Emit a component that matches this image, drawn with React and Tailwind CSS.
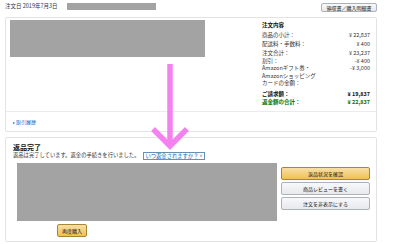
const yellowBtn =
  "flex items-center justify-center rounded-[2px] border border-[#a88734] bg-gradient-to-b from-[#f7dfa5] to-[#f0c14b] text-[5px] leading-none text-[#111]";
const grayBtn =
  "flex items-center justify-center rounded-[2px] border border-[#adb1b8] bg-gradient-to-b from-[#f7f8fa] to-[#e7e9ec] text-[5px] leading-none text-[#111]";

const Row = ({ label, value, className = "", h = "leading-[8px]" }) => (
  <div className={`flex justify-between ${h} ${className}`}>
    <span>{label}</span>
    <span className="whitespace-nowrap">{value}</span>
  </div>
);

const App = () => {
  return (
    <div className="relative w-[400px] h-[244px] overflow-hidden bg-white font-['Noto_Sans_CJK_JP',sans-serif] text-[#111]">
      {/* header */}
      <div className="flex items-start justify-between pl-[5px] pr-[23px] pt-[2px] h-[17px]">
        <div className="flex items-center">
          <span className="text-[5.5px] leading-[8px] text-[#333]">注文日 2019年7月3日</span>
          <div className="ml-[9px] w-[89px] h-[7px] bg-[#a3a3a3]" />
        </div>
        <div className={`${grayBtn} mt-[1px] w-[56px] h-[9px]`}>領収書／購入明細書</div>
      </div>

      {/* order card */}
      <div className="mx-[5px] w-[372px] h-[115px] rounded-[2px] border border-[#e3e3e3] flex flex-col">
        <div className="flex h-[94px] border-b border-[#ebebeb]">
          <div className="ml-[4px] mt-[2px] w-[195px] h-[37px] bg-[#a3a3a3]" />
          <div className="ml-[57px] mt-[3px] w-[108px] text-[5.5px] text-[#333]">
            <div className="font-bold leading-[8px] text-[#111]">注文内容</div>
            <Row className="mt-[2px]" label="商品の小計：" value="¥ 22,837" />
            <Row className="mt-[1px]" label="配送料・手数料：" value="¥ 400" />
            <Row className="mt-[1px]" label="注文合計：" value="¥ 23,237" />
            <Row className="mt-[1px]" h="leading-[7px]" label="割引：" value="-¥ 400" />
            <Row
              h="leading-[7.5px]"
              label={<>Amazonギフト券・<br />Amazonショッピング<br />カードの金額：</>}
              value="-¥ 3,000"
            />
            <Row className="mt-[2.5px] font-bold text-[#111]" label="ご請求額：" value="¥ 19,837" />
            <Row className="font-bold text-[#007600]" label="返金額の合計：" value="¥ 22,837" />
          </div>
        </div>
        <div className="flex-1 flex items-center pl-[7px] text-[5px] text-[#0066c0]">
          <span className="text-[4px] mr-[1px]">▸</span>取引履歴
        </div>
      </div>

      {/* return card */}
      <div className="mx-[5px] mt-[5px] w-[372px] h-[105px] rounded-[2px] border border-[#e3e3e3] pl-[7px] pt-[5px]">
        <div className="text-[7px] font-bold leading-[9px]">返品完了</div>
        <div className="flex items-center h-[7px] text-[5.3px] leading-[7px] text-[#333]">
          <span>返品は完了しています。返金の手続きを行いました。</span>
          <span className="ml-[4px] px-[1px] border border-[#6a8fb0] text-[#0066c0] leading-[6px]">
            いつ返金されますか？ <span className="text-[#666]">˅</span>
          </span>
        </div>
        <div className="flex mt-[4px]">
          <div className="flex flex-col items-center">
            <div className="ml-[4px] w-[260px] h-[58px] bg-[#a3a3a3]" />
            <div className={`${yellowBtn} mt-[3px] mr-[146px] w-[30px] h-[13px]`}>再度購入</div>
          </div>
          <div className="ml-[4px] mt-[4px] w-[89px] flex flex-col gap-[2px]">
            <div className={`${yellowBtn} h-[13px]`}>返品状況を確認</div>
            <div className={`${grayBtn} h-[13px]`}>商品レビューを書く</div>
            <div className={`${grayBtn} h-[13px]`}>注文を非表示にする</div>
          </div>
        </div>
      </div>

      {/* pink arrow annotation */}
      <svg className="absolute left-0 top-0 pointer-events-none" width="400" height="244">
        <path d="M170 64 V146" stroke="#f382f0" strokeWidth="5.5" fill="none" />
        <path d="M155 131 L170 146 L185 131" stroke="#f382f0" strokeWidth="5.5" fill="none" strokeLinecap="square" />
      </svg>
    </div>
  );
};

export default App;
